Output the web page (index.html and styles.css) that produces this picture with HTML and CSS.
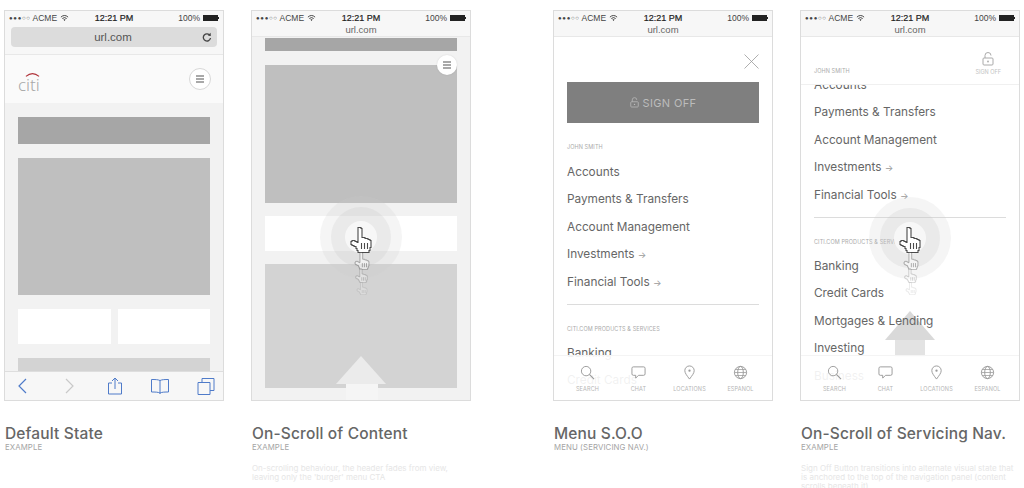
FILE: index.html
```html
<!DOCTYPE html>
<html lang="en">
<head>
<meta charset="utf-8">
<title>Scroll behaviour states</title>
<link rel="stylesheet" href="styles.css">
</head>
<body>
<svg class="defs" aria-hidden="true">
  <symbol id="wifi" viewBox="0 0 10 8"><path d="M1 3a6 6 0 0 1 8 0M2.600 4.600a3.600 3.600 0 0 1 4.800 0" fill="none" stroke="#333" stroke-width="1"/><path d="M3.800 5.800 5 7.400l1.200-1.600a2 2 0 0 0-2.400 0z" fill="#333"/></symbol>
  <symbol id="hand" viewBox="0 0 22 26"><path d="M8 .5h3v1h1v9h3v1h3v1h2v1h1v7h-1v3h-1v2H8v-2H7v-2H6v-2H4v-1H2v-1H1v-3h1v-1h3v1h2v1h1z" fill="#fff" stroke="#4a4a4a" stroke-width="1.100"/><path d="M11.500 16v6M14.500 16v6M17.500 16v6" stroke="#4a4a4a" stroke-width="1.100"/></symbol>
  <symbol id="burger" viewBox="0 0 10 8"><path d="M1 1h8M1 4h8M1 7h8" stroke="#555" stroke-width="1.200"/></symbol>
  <symbol id="search" viewBox="0 0 16 16"><circle cx="6.500" cy="6.500" r="5" fill="none" stroke="#999"/><path d="M10 10l5 5" stroke="#999" stroke-width="1.200"/></symbol>
  <symbol id="chat" viewBox="0 0 16 16"><path d="M2.500 2h11a1.500 1.500 0 0 1 1.500 1.500v6a1.500 1.500 0 0 1-1.500 1.500H8l-3 3v-3H2.500A1.500 1.500 0 0 1 1 9.500v-6A1.500 1.500 0 0 1 2.500 2z" fill="none" stroke="#999"/></symbol>
  <symbol id="pin" viewBox="0 0 16 16"><path d="M8 15C5 11 3 8.500 3 6a5 5 0 0 1 10 0c0 2.500-2 5-5 9z" fill="none" stroke="#999"/><circle cx="8" cy="6" r="1.200" fill="#999"/></symbol>
  <symbol id="globe" viewBox="0 0 16 16"><circle cx="8" cy="8" r="6.500" fill="none" stroke="#999"/><ellipse cx="8" cy="8" rx="3" ry="6.500" fill="none" stroke="#999"/><path d="M1.500 8h13M2.500 4.800h11M2.500 11.200h11" stroke="#999" stroke-width=".8"/></symbol>
  <symbol id="lock" viewBox="0 0 12 14"><rect x="1" y="6" width="10" height="7" rx="1" fill="none" stroke="currentColor"/><path d="M3 6V3.500a3 3 0 0 1 6 0" fill="none" stroke="currentColor"/><circle cx="6" cy="9.500" r=".9" fill="currentColor"/></symbol>
</svg>

<main class="board">
  <div class="pair">
    <section class="col">
      <div class="phone">
        <header class="chrome chrome-full">
          <div class="status"><span class="carrier"><span class="dots">●●●○○</span> ACME <svg class="wifi"><use href="#wifi"/></svg></span><span class="time">12:21 PM</span><span class="power">100% <i class="battery"></i></span></div>
          <div class="urlbar"><span>url.com</span>
            <svg class="reload" viewBox="0 0 10 10"><path d="M8 3.500A3.600 3.600 0 1 0 8.500 6" fill="none" stroke="#444" stroke-width="1.300"/><path d="M5.800 3.600 8.800 4 8.600 .8z" fill="#444"/></svg>
          </div>
        </header>
        <div class="site-head">
          <div class="citi"><svg class="citi-arc" viewBox="0 0 16 5"><path d="M1 4.500Q8-1.500 15 4.500" fill="none" stroke="#b0333a" stroke-width="1.200"/></svg><span>citi</span></div>
          <span class="burger burger-outline"><svg><use href="#burger"/></svg></span>
        </div>
        <div class="content content-default">
          <div class="block dark h27"></div>
          <div class="block mid h137"></div>
          <div class="cards"><div class="block white h35"></div><div class="block white h35"></div></div>
          <div class="block light h30"></div>
        </div>
        <footer class="toolbar">
          <svg class="tool" viewBox="0 0 18 18"><path d="M12 2 5 9l7 7" fill="none" stroke="#4f7bc9" stroke-width="1.200"/></svg>
          <svg class="tool" viewBox="0 0 18 18"><path d="m6 2 7 7-7 7" fill="none" stroke="#c9c9c9" stroke-width="1.200"/></svg>
          <svg class="tool" viewBox="0 0 18 18"><path d="M6 6H2.500v11h13V6H12M9 12V1M6 4l3-3 3 3" fill="none" stroke="#4f7bc9"/></svg>
          <svg class="tool" viewBox="0 0 18 18"><path d="M9 3.500C7 2.500 4 2.500 .5 2.500v12.500c3.500 0 6.500 0 8.500 1 2-1 5-1 8.500-1V2.500C14 2.500 11 2.500 9 3.500zM9 3.500V17" fill="none" stroke="#4f7bc9"/></svg>
          <svg class="tool" viewBox="0 0 18 18"><path d="M1 5.500h12v12H1zM5 5.500V1.500h12v12h-4" fill="none" stroke="#4f7bc9"/></svg>
        </footer>
      </div>
      <div class="caption"><h2>Default State</h2><p class="sub">EXAMPLE</p></div>
    </section>

    <section class="col">
      <div class="phone">
        <header class="chrome">
          <div class="status"><span class="carrier"><span class="dots">●●●○○</span> ACME <svg class="wifi"><use href="#wifi"/></svg></span><span class="time">12:21 PM</span><span class="power">100% <i class="battery"></i></span></div>
          <div class="url-small">url.com</div>
        </header>
        <div class="content content-scrolled">
          <div class="block dark h13"></div>
          <div class="block mid h138"></div>
          <div class="block white h35"></div>
          <div class="block light h124"></div>
        </div>
        <span class="burger burger-float"><svg><use href="#burger"/></svg></span>
        <svg class="arrow arrow-soft" viewBox="0 0 50 44"><path d="M10 28h32v16H10z" fill="#f5f5f5"/><path d="M25 0 50 28H0z" fill="#ebebeb"/></svg>
        <div class="target target-a"><div class="ring-2"><div class="ring-3"></div></div></div>
        <div class="hands">
          <svg class="hand h1"><use href="#hand"/></svg>
          <svg class="hand h2"><use href="#hand"/></svg>
          <svg class="hand h3"><use href="#hand"/></svg>
          <svg class="hand h4"><use href="#hand"/></svg>
        </div>
      </div>
      <div class="caption"><h2>On-Scroll of Content</h2><p class="sub">EXAMPLE</p>
        <p class="desc">On-scrolling behaviour, the header fades from view, leaving only the 'burger' menu CTA</p></div>
    </section>
  </div>

  <div class="pair">
    <section class="col">
      <div class="phone">
        <header class="chrome">
          <div class="status"><span class="carrier"><span class="dots">●●●○○</span> ACME <svg class="wifi"><use href="#wifi"/></svg></span><span class="time">12:21 PM</span><span class="power">100% <i class="battery"></i></span></div>
          <div class="url-small">url.com</div>
        </header>
        <div class="menu">
          <div class="close-row"><svg class="close" viewBox="0 0 15 15"><path d="M.5.500l14 14M14.500.500l-14 14" stroke="#9a9a9a" stroke-width=".8"/></svg></div>
          <div class="signoff"><svg class="lock-small"><use href="#lock"/></svg> SIGN OFF</div>
          <p class="label label-user">JOHN SMITH</p>
          <ul class="items">
            <li>Accounts</li><li>Payments &amp; Transfers</li><li>Account Management</li><li>Investments <span class="chev">→</span></li><li>Financial Tools <span class="chev">→</span></li>
          </ul>
          <hr class="rule">
          <p class="label label-prod">CITI.COM PRODUCTS &amp; SERVICES</p>
          <ul class="items items-tight"><li>Banking</li><li>Credit Cards</li></ul>
        </div>
        <nav class="tabs">
          <a><svg><use href="#search"/></svg>SEARCH</a><a><svg><use href="#chat"/></svg>CHAT</a><a><svg><use href="#pin"/></svg>LOCATIONS</a><a><svg><use href="#globe"/></svg>ESPANOL</a>
        </nav>
      </div>
      <div class="caption"><h2>Menu S.O.O</h2><p class="sub">MENU (SERVICING NAV.)</p></div>
    </section>

    <section class="col">
      <div class="phone">
        <header class="chrome">
          <div class="status"><span class="carrier"><span class="dots">●●●○○</span> ACME <svg class="wifi"><use href="#wifi"/></svg></span><span class="time">12:21 PM</span><span class="power">100% <i class="battery"></i></span></div>
          <div class="url-small">url.com</div>
        </header>
        <svg class="arrow arrow-hard" viewBox="0 0 50 46"><path d="M10 29h30v17H10z" fill="#e3e3e3"/><path d="M25 0 50 29H0z" fill="#d9d9d9"/></svg>
        <div class="menu menu-scrolled">
          <ul class="items">
            <li>Accounts</li><li>Payments &amp; Transfers</li><li>Account Management</li><li>Investments <span class="chev">→</span></li><li>Financial Tools <span class="chev">→</span></li>
          </ul>
          <hr class="rule">
          <p class="label label-prod">CITI.COM PRODUCTS &amp; SERVICES</p>
          <ul class="items items-tight"><li>Banking</li><li>Credit Cards</li><li>Mortgages &amp; Lending</li><li>Investing</li><li>Business</li></ul>
        </div>
        <div class="sticky-head">
          <span class="label">JOHN SMITH</span>
          <span class="sticky-lock"><svg><use href="#lock"/></svg>SIGN OFF</span>
        </div>
        <nav class="tabs">
          <a><svg><use href="#search"/></svg>SEARCH</a><a><svg><use href="#chat"/></svg>CHAT</a><a><svg><use href="#pin"/></svg>LOCATIONS</a><a><svg><use href="#globe"/></svg>ESPANOL</a>
        </nav>
        <div class="target target-b"><div class="ring-2"><div class="ring-3"></div></div></div>
        <div class="hands">
          <svg class="hand h1"><use href="#hand"/></svg>
          <svg class="hand h2"><use href="#hand"/></svg>
          <svg class="hand h3"><use href="#hand"/></svg>
          <svg class="hand h4"><use href="#hand"/></svg>
        </div>
      </div>
      <div class="caption"><h2>On-Scroll of Servicing Nav.</h2><p class="sub">EXAMPLE</p>
        <p class="desc">Sign Off Button transitions into alternate visual state that is anchored to the top of the navigation panel (content scrolls beneath it)</p></div>
    </section>
  </div>
</main>
</body>
</html>
```
FILE: styles.css
```css
* { box-sizing: border-box; }
html, body { margin: 0; height: 488px; overflow: hidden; background: #fff; }
body { font-family: Inter, "Noto Sans", sans-serif; color: #666; }
.defs { position: absolute; width: 0; height: 0; }
.board { display: flex; gap: 82px; padding: 10px 0 0 4px; }
.pair { display: flex; gap: 27px; }
.col { width: 220px; flex: none; }

.phone { position: relative; height: 391px; border: 1px solid #dcdcdc; display: flex; flex-direction: column; overflow: hidden; background: #fff; }

.chrome { height: 26px; flex: none; background: #f7f7f7; border-bottom: 1px solid #e8e8e8; font-family: "Liberation Sans", sans-serif; color: #333; }
.chrome-full { height: 44px; }
.status { display: grid; grid-template-columns: 1fr auto 1fr; align-items: center; height: 12px; margin-top: 1px; padding: 0 4px 0 4px; font-size: 9px; line-height: 12px; }
.carrier { white-space: nowrap; color: #444; font-size: 8.500px; }
.dots { font-size: 6px; letter-spacing: .7px; vertical-align: 1px; }
.wifi { width: 9px; height: 8px; vertical-align: -1px; margin-left: 1px; }
.time { font-weight: 400; color: #222; -webkit-text-stroke: .2px #222; }
.power { display: flex; justify-content: flex-end; align-items: center; gap: 3px; font-size: 8.500px; color: #444; padding-right: 1px; }
.battery { display: block; width: 15px; height: 6px; background: #222; position: relative; }
.battery::after { content: ""; position: absolute; right: -1px; top: 2px; width: 1px; height: 2px; background: #222; }
.url-small { text-align: center; font-size: 9.500px; line-height: 12px; color: #666; }
.urlbar { position: relative; height: 20px; margin: 3px 6px 0; border-radius: 4px; background: #dcdcdc; text-align: center; font-size: 11.500px; line-height: 20px; color: #555; }
.urlbar span { margin-right: 2px; }
.reload { position: absolute; right: 5px; top: 5px; width: 10px; height: 10px; }

.site-head { height: 48px; flex: none; display: flex; justify-content: space-between; align-items: center; padding: 0 12px 0 13px; background: #fafafa; }
.citi { position: relative; font-size: 17px; line-height: 15px; color: #a8a8a8; font-family: "Noto Sans", sans-serif; font-weight: 300; padding-top: 5px; margin-top: 6px; }
.citi-arc { position: absolute; left: 7px; top: 0; width: 15px; height: 5px; }
.burger { display: flex; align-items: center; justify-content: center; border-radius: 50%; background: #fff; }
.burger svg { width: 10px; height: 8px; }
.burger-outline { width: 22px; height: 22px; border: 1px solid #d8d8d8; margin-top: -1px; }
.burger-float { position: absolute; width: 20px; height: 20px; left: 185px; top: 44px; box-shadow: 0 0 2px rgba(0,0,0,.12); }

.content { flex: 1; min-height: 0; background: #f2f2f2; padding: 0 13px; overflow: hidden; display: flex; flex-direction: column; }
.content-default { padding-top: 14px; gap: 14px; }
.content-scrolled { padding-top: 1px; gap: 13px; }
.content-scrolled .dark { margin-bottom: 1px; }
.block { flex: none; }
.dark { background: #a6a6a6; }
.mid { background: #bfbfbf; }
.light { background: #d3d3d3; }
.white { background: #fff; }
.h13 { height: 13px; } .h27 { height: 27px; } .h30 { height: 30px; } .h35 { height: 35px; }
.h124 { height: 124px; } .h137 { height: 137px; } .h138 { height: 138px; }
.cards { display: grid; grid-template-columns: 93px 92px; gap: 7px; }

.toolbar { position: relative; height: 29px; flex: none; display: flex; justify-content: space-between; align-items: center; padding: 0 8px 0 9px; background: #f7f7f7; border-top: 1px solid #dedede; }
.tool { width: 18px; height: 18px; margin-right: 27px; }
.tool:last-child { margin-right: 0; }

.arrow { position: absolute; width: 50px; }
.arrow-soft { left: 84px; top: 345px; height: 44px; }
.arrow-hard { left: 84px; top: 300px; height: 46px; }

.target { position: absolute; width: 82px; height: 82px; border-radius: 50%; background: rgba(205,205,205,.2); display: flex; align-items: center; justify-content: center; }
.ring-2 { width: 60px; height: 60px; border-radius: 50%; background: rgba(195,195,195,.22); display: flex; align-items: center; justify-content: center; }
.ring-3 { width: 32px; height: 32px; border-radius: 50%; background: #f7f7f7; }
.target-a { left: 68px; top: 185px; }
.target-b { left: 68px; top: 186px; }

.hands { position: absolute; left: 98px; top: 216px; width: 22px; height: 70px; }
.hand { position: absolute; }
.h1 { left: 0; top: 0; width: 22px; height: 26px; }
.h2 { left: 4px; top: 25px; width: 16px; height: 18px; opacity: .5; }
.h3 { left: 4px; top: 41px; width: 15px; height: 15px; opacity: .35; }
.h4 { left: 6px; top: 55px; width: 12px; height: 13px; opacity: .18; }

.menu { position: relative; flex: 1; min-height: 0; overflow: hidden; padding: 0 13px; }
.menu-scrolled { padding-top: 35px; }
.close-row { display: flex; justify-content: flex-end; padding-top: 17px; height: 45px; }
.close { width: 15px; height: 15px; }
.signoff { display: flex; align-items: center; justify-content: center; gap: 4px; height: 41px; background: #7f7f7f; color: #bcbcbc; font-size: 11px; letter-spacing: .35px; }
.lock-small { width: 9px; height: 11px; color: #bcbcbc; }
.label { margin: 0; font-size: 5.500px; line-height: 10px; color: #aaa; letter-spacing: .1px; white-space: nowrap; }
.label-user { margin-top: 19px; }
.label-prod { margin-top: 19px; }
.items { list-style: none; margin: 7px 0 0; padding: 0; font-size: 11.800px; line-height: 27.400px; color: #666; letter-spacing: 0; white-space: nowrap; }
.menu-scrolled > .items:first-child { margin-top: 0; }
.items-tight { margin-top: 6px; }
.chev { color: #999; font-size: 9px; }
.rule { border: 0; height: 1px; margin: 8px 0 0; background: #dcdcdc; }

.sticky-head { position: absolute; left: 0; right: 0; top: 26px; height: 48px; display: flex; justify-content: space-between; align-items: flex-end; padding: 0 18px 8px 13px; background: #fff; border-bottom: 1px solid #f0f0f0; }
.sticky-lock { display: flex; flex-direction: column; align-items: center; gap: 3px; font-size: 5.500px; line-height: 7px; color: #c2c2c2; }
.sticky-lock svg { width: 12px; height: 14px; color: #aaa; }

.tabs { position: absolute; left: 0; right: 0; bottom: 0; height: 45px; padding: 0 7px 0 8px; display: grid; grid-template-columns: repeat(4, 51px); background: rgba(255,255,255,.91); border-top: 1px solid #f4f4f4; }
.tabs a { display: flex; flex-direction: column; align-items: center; padding-top: 9px; font-size: 5.500px; line-height: 8px; color: #b5b5b5; letter-spacing: .15px; }
.tabs svg { width: 15px; height: 15px; margin-bottom: 5px; }

.caption { padding: 23px 0 0 1px; }
.caption h2 { margin: 0; font-size: 15.500px; line-height: 20px; font-weight: 500; color: #666; letter-spacing: .15px; white-space: nowrap; }
.sub { margin: 0; font-size: 7.800px; line-height: 7px; color: #a5a5a5; letter-spacing: .1px; }
.desc { margin: 13px 0 0; font-size: 8px; line-height: 9px; color: #e6e6e6; width: 218px; }
```
